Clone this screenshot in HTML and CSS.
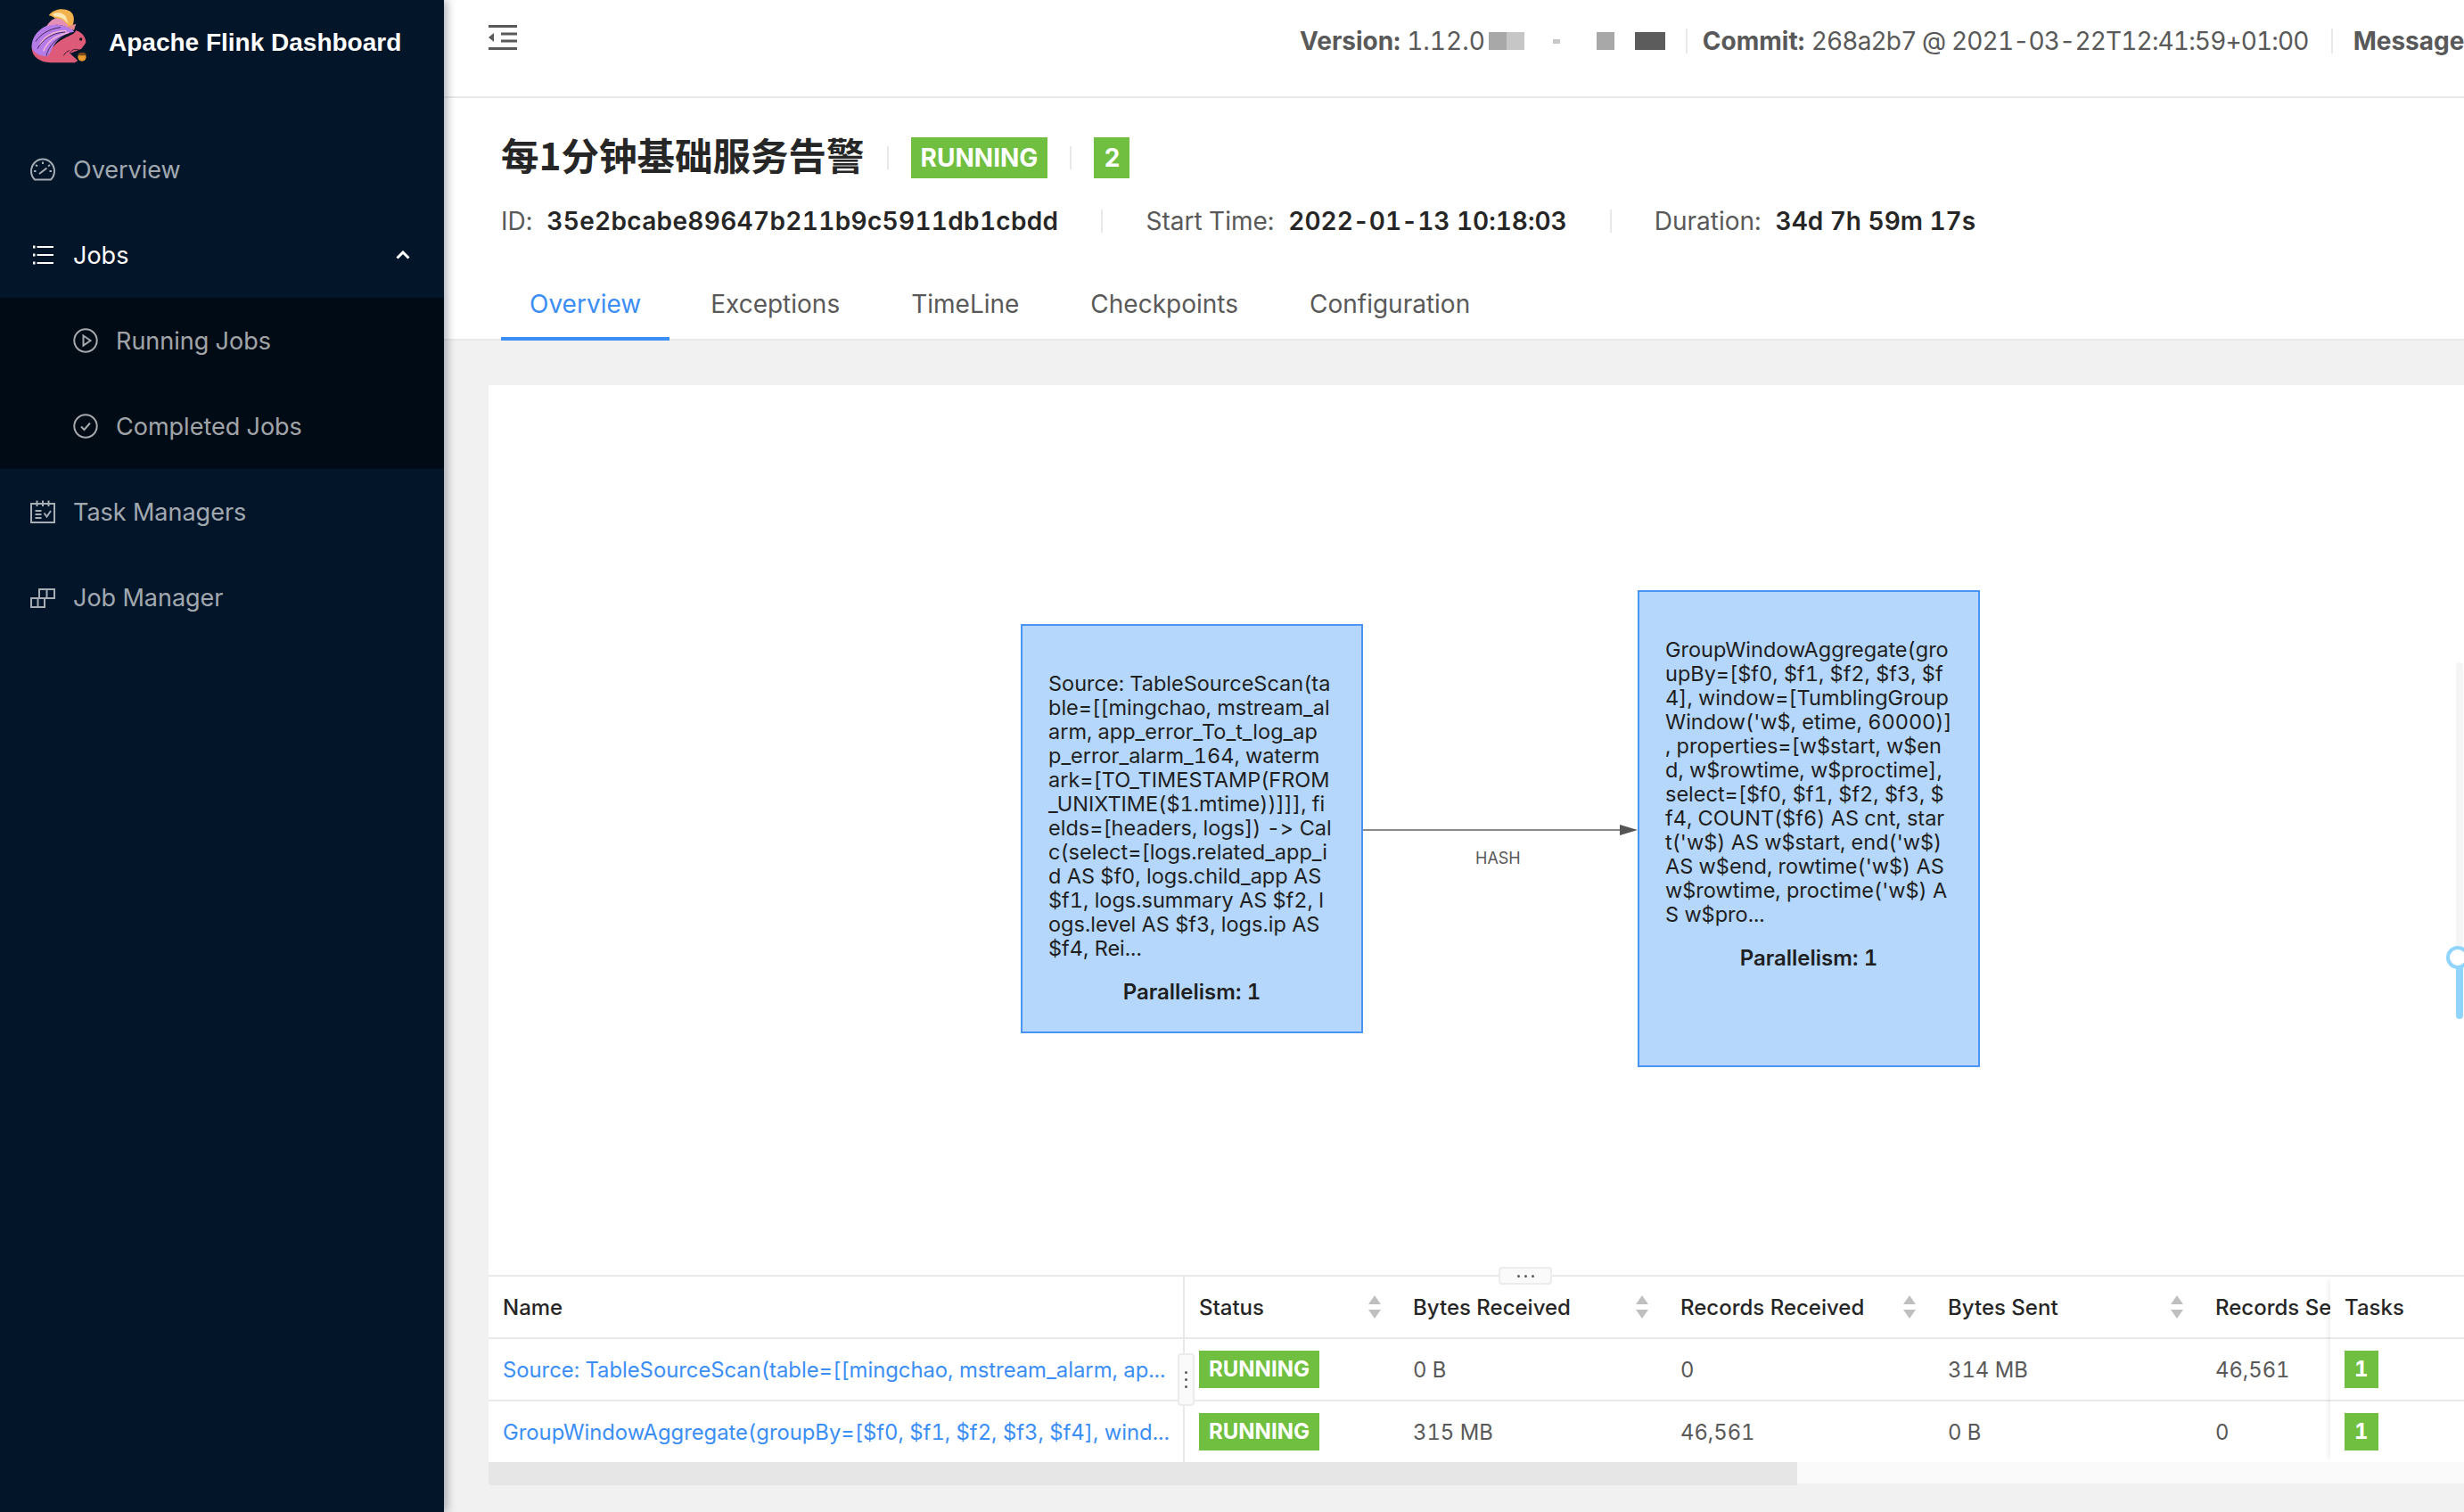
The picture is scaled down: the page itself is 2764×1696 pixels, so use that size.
FILE: index.html
```html
<!DOCTYPE html>
<html>

<head>
    <title>Apache Flink Dashboard</title>
    <meta name="viewport" content="width=device-width, initial-scale=1">
    <link rel="stylesheet" href="styles.css">
</head>

<body>
    <div class="app">
        <div class="sidebar">
            <div class="logo">
                <svg class="logo-mark" viewBox="0 0 228 216">
                    <path fill="#dd5a78" d="M24 140C18 178 50 199 95 199H168L178 192L152 168L190 152L205 132C206 115 192 95 172 91L165 100C150 110 130 115 105 135C90 150 80 160 70 165C50 165 35 155 24 140Z"/>
                    <path fill="#b57be8" d="M23 150C20 120 40 90 70 76C100 66 130 70 160 88L165 95C135 100 105 120 92 150C86 165 82 172 74 178C46 176 30 166 23 150Z"/>
                    <path fill="none" stroke="#eeb0d8" stroke-width="5" d="M50 140C62 112 95 92 140 92M62 160C75 128 105 106 148 98"/>
                    <path fill="none" stroke="#2a1a3a" stroke-width="2.500" d="M36 128C50 105 80 85 120 80M42 152C60 120 92 98 135 96M72 176C80 140 110 112 152 100"/>
                    <path fill="#e58fb8" d="M72 78C85 55 98 48 118 48L158 70L160 88C130 70 100 66 72 78Z"/>
                    <path fill="#f2b24e" d="M80 40C100 15 130 15 150 25C166 35 168 55 160 75L150 80C135 60 122 48 100 50C98 46 90 42 80 40Z"/>
                    <path fill="#fbe6b4" d="M92 36C108 26 128 30 138 44L146 68C130 50 116 42 100 44C98 41 96 38 92 36Z"/>
                    <path fill="#e58a8e" d="M140 78L172 68L165 90Z"/>
                    <path fill="none" stroke="#2a1020" stroke-width="2.500" d="M150 168C158 152 176 150 186 160M130 175C136 165 142 160 150 158"/>
                    <circle cx="192" cy="180" r="14" fill="#e89a2e"/>
                    <path fill="#7a4a1a" d="M178 170C186 162 200 162 207 170L205 175H180Z"/>
                    <circle cx="188" cy="120" r="5" fill="#1a1a1a"/>
                </svg>
                <span class="logo-text">Apache Flink Dashboard</span>
            </div>
            <div class="menu">
                <div class="menu-item">
                    <svg class="icon" viewBox="0 0 28 28"><path d="M5 25.500C2.500 23 1 19.700 1 16C1 8.500 6.800 2.500 14 2.500S27 8.500 27 16C27 19.700 25.500 23 23 25.500Z"/><path d="M10 19L18.500 12.500M14 5.500V8M6 9L8 10.500M22 9L20 10.500M4 16H6.500M24 16H21.500"/></svg>
                    <span>Overview</span>
                </div>
                <div class="menu-item menu-open">
                    <svg class="icon" viewBox="0 0 28 28"><path d="M7.500 5H26M7.500 14H26M7.500 23H26"/><path class="dots" d="M3 3.500h2.500v3H3zM3 12.500h2.500v3H3zM3 21.500h2.500v3H3z"/></svg>
                    <span>Jobs</span>
                    <svg class="chevron" viewBox="0 0 16 10"><path d="M1.500 8.500L8 2L14.500 8.500"/></svg>
                </div>
                <div class="submenu">
                    <div class="menu-item">
                        <svg class="icon" viewBox="0 0 28 28"><circle cx="14" cy="14" r="12.700"/><path d="M11.500 8.500L19.500 14L11.500 19.500Z"/></svg>
                        <span>Running Jobs</span>
                    </div>
                    <div class="menu-item">
                        <svg class="icon" viewBox="0 0 28 28"><circle cx="14" cy="14" r="12.700"/><path d="M9 14.500L12.500 18L19 10.500"/></svg>
                        <span>Completed Jobs</span>
                    </div>
                </div>
                <div class="menu-item">
                    <svg class="icon" viewBox="0 0 28 28"><path d="M1 5H27V26H1ZM7.500 1.500V8M14 1.500V8M20.500 1.500V8M5.500 13H12.500M5.500 17H12.500M5.500 21H12.500M15.500 15.500L18.500 19.500L23 13"/></svg>
                    <span>Task Managers</span>
                </div>
                <div class="menu-item">
                    <svg class="icon" viewBox="0 0 28 28"><path d="M1 15H16V25H1ZM8.500 15V25M10 5H27V15H10ZM18.500 5V15"/></svg>
                    <span>Job Manager</span>
                </div>
            </div>
        </div>

        <div class="main">
            <div class="topbar">
                <svg class="fold-icon" viewBox="0 0 32 28"><path d="M0 1.500H32M14 10H32M14 18H32M0 26.500H32"/><path class="fold-arrow" d="M0 14L6 9V19Z"/></svg>
                <div class="version-info">
                    <span class="version"><b>Version:</b> 1.12.0</span>
                    <i class="smudge smudge-a"></i>
                    <i class="smudge smudge-b"></i>
                    <i class="smudge smudge-c"></i>
                    <i class="smudge smudge-d"></i>
                    <i class="bar-divider"></i>
                    <span><b>Commit:</b> <span class="commit-value">268a2b7 @ 2021-03-22T12:41:59+01:00</span></span>
                    <i class="bar-divider bar-divider-last"></i>
                    <span><b>Message:</b></span>
                </div>
            </div>

            <div class="job-header">
                <div class="title-row">
                    <h2>每1分钟基础服务告警</h2>
                    <i class="title-divider"></i>
                    <span class="tag tag-large">RUNNING</span>
                    <i class="title-divider"></i>
                    <span class="tag tag-large">2</span>
                </div>
                <div class="meta-row">
                    <span class="meta-label">ID:</span>
                    <b class="meta-value meta-id">35e2bcabe89647b211b9c5911db1cbdd</b>
                    <i class="meta-divider"></i>
                    <span class="meta-label">Start Time:</span>
                    <b class="meta-value">2022-01-13 10:18:03</b>
                    <i class="meta-divider"></i>
                    <span class="meta-label">Duration:</span>
                    <b class="meta-value">34d 7h 59m 17s</b>
                </div>
                <div class="tabs">
                    <a class="tab tab-active">Overview</a>
                    <a class="tab">Exceptions</a>
                    <a class="tab">TimeLine</a>
                    <a class="tab">Checkpoints</a>
                    <a class="tab">Configuration</a>
                </div>
            </div>

            <div class="content">
                <div class="canvas">
                    <div class="graph">
                        <div class="node node-source">
                            <div class="node-text">Source: TableSourceScan(ta<br>ble=[[mingchao, mstream_al<br>arm, app_error_To_t_log_ap<br>p_error_alarm_164, waterm<br>ark=[TO_TIMESTAMP(FROM<br>_UNIXTIME($1.mtime))]]], fi<br>elds=[headers, logs]) -&gt; Cal<br>c(select=[logs.related_app_i<br>d AS $f0, logs.child_app AS<br>$f1, logs.summary AS $f2, l<br>ogs.level AS $f3, logs.ip AS<br>$f4, Rei...</div>
                            <div class="node-parallel">Parallelism: 1</div>
                        </div>
                        <div class="node node-agg">
                            <div class="node-text">GroupWindowAggregate(gro<br>upBy=[$f0, $f1, $f2, $f3, $f<br>4], window=[TumblingGroup<br>Window('w$, etime, 60000)]<br>, properties=[w$start, w$en<br>d, w$rowtime, w$proctime],<br>select=[$f0, $f1, $f2, $f3, $<br>f4, COUNT($f6) AS cnt, star<br>t('w$) AS w$start, end('w$)<br>AS w$end, rowtime('w$) AS<br>w$rowtime, proctime('w$) A<br>S w$pro...</div>
                            <div class="node-parallel">Parallelism: 1</div>
                        </div>
                        <svg class="edge" viewBox="0 0 308 20"><path class="edge-line" d="M0 10H290"/><path class="edge-head" d="M288 4L308 10L288 16Z"/></svg>
                        <span class="edge-label">HASH</span>
                        <div class="zoom-track"><div class="zoom-fill"></div><div class="zoom-handle"></div></div>
                    </div>

                    <div class="table-panel">
                        <div class="resize-bar"><i></i><i></i><i></i></div>
                        <div class="resize-col"><i></i><i></i><i></i></div>
                        <div class="table-scroll">
                            <table class="vertex-table">
                                <colgroup>
                                    <col class="col-name"><col class="col-status"><col class="col-num"><col class="col-num"><col class="col-num"><col class="col-num">
                                </colgroup>
                                <thead>
                                    <tr>
                                        <th class="name-cell">Name</th>
                                        <th><div class="th-sort">Status<svg class="sorter" viewBox="0 0 16 26"><path d="M8 0L15 10H1Z"/><path class="sort-down" d="M8 26L1 16H15Z"/></svg></div></th>
                                        <th><div class="th-sort">Bytes Received<svg class="sorter" viewBox="0 0 16 26"><path d="M8 0L15 10H1Z"/><path class="sort-down" d="M8 26L1 16H15Z"/></svg></div></th>
                                        <th><div class="th-sort">Records Received<svg class="sorter" viewBox="0 0 16 26"><path d="M8 0L15 10H1Z"/><path class="sort-down" d="M8 26L1 16H15Z"/></svg></div></th>
                                        <th><div class="th-sort">Bytes Sent<svg class="sorter" viewBox="0 0 16 26"><path d="M8 0L15 10H1Z"/><path class="sort-down" d="M8 26L1 16H15Z"/></svg></div></th>
                                        <th>Records Sent</th>
                                    </tr>
                                </thead>
                                <tbody>
                                    <tr>
                                        <td class="name-cell"><a>Source: TableSourceScan(table=[[mingchao, mstream_alarm, ap...</a></td>
                                        <td><span class="tag">RUNNING</span></td>
                                        <td>0 B</td>
                                        <td>0</td>
                                        <td>314 MB</td>
                                        <td>46,561</td>
                                    </tr>
                                    <tr>
                                        <td class="name-cell"><a>GroupWindowAggregate(groupBy=[$f0, $f1, $f2, $f3, $f4], wind...</a></td>
                                        <td><span class="tag">RUNNING</span></td>
                                        <td>315 MB</td>
                                        <td>46,561</td>
                                        <td>0 B</td>
                                        <td>0</td>
                                    </tr>
                                </tbody>
                            </table>
                        </div>
                        <div class="table-fixed">
                            <table class="vertex-table">
                                <thead><tr><th>Tasks</th></tr></thead>
                                <tbody>
                                    <tr><td><span class="tag">1</span></td></tr>
                                    <tr><td><span class="tag">1</span></td></tr>
                                </tbody>
                            </table>
                        </div>
                    </div>
                    <div class="scrollbar"><div class="scroll-thumb"></div></div>
                </div>
            </div>
        </div>
    </div>
</body>

</html>
```
FILE: styles.css
```css
* {
    box-sizing: border-box;
}

html, body {
    margin: 0;
    height: 100%;
    overflow: hidden;
}

body {
    font-family: Inter, "Noto Sans CJK SC", sans-serif;
    font-size: 28px;
    font-variant-numeric: tabular-nums;
    font-variant-ligatures: none;
    font-feature-settings: "tnum" 1, "calt" 0;
    color: #595959;
    background-color: #f1f1f1;
}

.app {
    display: flex;
    height: 1696px;
}

/* sidebar */
.sidebar {
    flex: none;
    width: 498px;
    background-color: #021529;
    box-shadow: 3px 0 10px rgba(0, 21, 41, 0.35);
    position: relative;
    z-index: 2;
    font-size: 27px;
}

.logo {
    display: flex;
    align-items: flex-start;
    height: 142px;
    padding: 4px 0 0 28px;
}

.logo-mark {
    width: 76px;
    height: 72px;
    flex: none;
}

.logo-text {
    font-family: "Liberation Sans", Arial, sans-serif;
    font-weight: 700;
    font-size: 28px;
    line-height: 88px;
    color: white;
    margin-left: 18px;
}

.menu-item {
    display: flex;
    align-items: center;
    height: 96px;
    padding-left: 34px;
    color: rgba(255, 255, 255, 0.65);
}

.menu-open {
    color: white;
}

.icon {
    width: 28px;
    height: 28px;
    flex: none;
    margin-right: 20px;
    fill: none;
    stroke: currentColor;
    stroke-width: 2;
}

.icon .dots {
    fill: currentColor;
    stroke: none;
}

.chevron {
    width: 16px;
    height: 10px;
    margin-left: auto;
    margin-right: 38px;
    fill: none;
    stroke: currentColor;
    stroke-width: 3;
}

.submenu {
    background-color: #000b15;
}

.submenu .menu-item {
    padding-left: 82px;
    height: 96px;
}

/* top bar */
.main {
    flex: 1;
    min-width: 0;
    overflow: hidden;
}

.topbar {
    display: flex;
    align-items: flex-start;
    height: 110px;
    background-color: white;
    border-bottom: 2px solid #e9e9e9;
    white-space: nowrap;
}

.fold-icon {
    flex: none;
    width: 32px;
    height: 28px;
    margin: 28px 0 0 50px;
    fill: none;
    stroke: #595959;
    stroke-width: 3;
}

.fold-arrow {
    fill: #595959;
    stroke: none;
}

.version-info {
    position: relative;
    display: flex;
    align-items: center;
    flex: none;
    height: 34px;
    margin: 29px 0 0 878px;
}

.version-info b {
    font-weight: 700;
}

.commit-value {
    letter-spacing: -0.85px;
}

.bar-divider {
    width: 2px;
    height: 28px;
    margin: 0 17px;
    background-color: #e8e8e8;
}

.bar-divider-last {
    margin: 0 23px 0 25px;
}

.smudge {
    display: block;
    height: 20px;
    flex: none;
}

.smudge-a {
    width: 40px;
    margin-left: 4px;
    background: linear-gradient(90deg, #a8a8a8 50%, #c6c6c6 50%);
}

.smudge-b {
    width: 8px;
    height: 5px;
    margin-left: 32px;
    background-color: #c8c8c8;
}

.smudge-c {
    width: 20px;
    margin-left: 41px;
    background-color: #a8a8a8;
}

.smudge-d {
    width: 34px;
    margin-left: 23px;
    margin-right: 6px;
    background-color: #5c5c5c;
}

/* job header */
.job-header {
    background-color: white;
    height: 272px;
    padding: 36px 0 0 64px;
    border-bottom: 2px solid #e9e9e9;
}

.title-row {
    display: flex;
    align-items: center;
    height: 54px;
}

h2 {
    margin: 0;
    font-family: "Noto Sans CJK SC", sans-serif;
    font-size: 42.500px;
    line-height: 54px;
    font-weight: 600;
    color: #262626;
}

.title-divider {
    width: 2px;
    height: 26px;
    margin: 8px 25px 0;
    background-color: #e8e8e8;
}

.tag {
    display: inline-block;
    height: 42px;
    line-height: 42px;
    padding: 0 11px;
    font-size: 24px;
    font-weight: 700;
    color: white;
    background-color: #70bf40;
    vertical-align: middle;
}

.tag-large {
    height: 46px;
    line-height: 46px;
    margin-top: 8px;
    font-size: 28px;
    padding: 0 11px;
}

.meta-row {
    display: flex;
    align-items: center;
    height: 40px;
    margin-top: 28px;
    white-space: nowrap;
}

.meta-value {
    margin-left: 16px;
    font-weight: 600;
    color: #262626;
}

.meta-id {
    letter-spacing: 0.33px;
}

.meta-divider {
    width: 2px;
    height: 26px;
    margin: 0 48px;
    background-color: #e8e8e8;
}

.tabs {
    display: flex;
    height: 84px;
    margin-top: 30px;
}

.tab {
    padding: 16px 32px 0;
    margin-right: 16px;
    height: 84px;
    line-height: 54px;
}

.tab-active {
    color: #3b8ef5;
    margin-right: 14px;
    border-bottom: 4px solid #3b8ef5;
}

/* canvas */
.content {
    padding: 50px 0 0 50px;
}

.canvas {
    width: 2216px;
    background-color: white;
    border-radius: 0 0 4px 4px;
}

.graph {
    position: relative;
    height: 998px;
}

.node {
    position: absolute;
    width: 384px;
    background-color: #b5d7fb;
    border: 2px solid #4a94f5;
    color: #1f1f1f;
    font-size: 23.500px;
    line-height: 27px;
    white-space: nowrap;
}

.node-source {
    left: 597px;
    top: 268px;
    height: 459px;
    padding: 51px 0 0 29px;
}

.node-agg {
    left: 1289px;
    top: 230px;
    height: 535px;
    padding: 51px 0 0 29px;
}

.node-parallel {
    margin: 22px 0 0 -29px;
    text-align: center;
    font-size: 24px;
    font-weight: 600;
}

.edge {
    position: absolute;
    left: 981px;
    top: 489px;
    width: 308px;
    height: 20px;
}

.edge-line {
    fill: none;
    stroke: #8a8a8a;
    stroke-width: 2;
}

.edge-head {
    fill: #555;
}

.edge-label {
    position: absolute;
    left: 1107px;
    top: 520px;
    font-size: 18px;
    line-height: 22px;
    color: #595959;
}

.zoom-track {
    position: absolute;
    left: 2207px;
    top: 311px;
    width: 8px;
    height: 400px;
    border-radius: 4px;
    background-color: #f5f5f5;
}

.zoom-fill {
    position: absolute;
    left: 0;
    bottom: 0;
    width: 8px;
    height: 70px;
    border-radius: 4px;
    background-color: #91d5ff;
}

.zoom-handle {
    position: absolute;
    left: -11px;
    top: 318px;
    width: 26px;
    height: 26px;
    border-radius: 50%;
    border: 4px solid #91d5ff;
    background-color: white;
}

/* table */
.table-panel {
    position: relative;
    display: flex;
    border-top: 2px solid #e9e9e9;
}

.table-scroll {
    flex: none;
    width: 2066px;
    overflow: hidden;
}

.table-fixed {
    flex: 1;
    box-shadow: -6px 0 6px -4px rgba(0, 0, 0, 0.08);
    position: relative;
}

.vertex-table {
    width: 100%;
    table-layout: fixed;
    border-collapse: separate;
    border-spacing: 0;
    font-size: 23.800px;
}

.table-scroll .vertex-table {
    width: 2221px;
}

.col-name {
    width: 781px;
}

.col-status {
    width: 240px;
}

.col-num {
    width: 300px;
}

.vertex-table th {
    height: 70px;
    padding: 0 16px;
    text-align: left;
    font-size: 24px;
    font-weight: 500;
    color: #262626;
    border-bottom: 2px solid #e9e9e9;
    white-space: nowrap;
    overflow: hidden;
}

.vertex-table td {
    height: 70px;
    padding: 0 16px;
    border-bottom: 2px solid #e9e9e9;
    white-space: nowrap;
    overflow: hidden;
}

.vertex-table tr:last-child td {
    height: 68px;
    border-bottom: none;
}

.vertex-table .name-cell {
    border-right: 2px solid #e9e9e9;
}

.vertex-table a {
    color: #3b8ef5;
}

.th-sort {
    display: flex;
    align-items: center;
    justify-content: space-between;
    padding-right: 3px;
}

.sorter {
    width: 16px;
    height: 26px;
    fill: #bfbfbf;
}

.resize-bar {
    position: absolute;
    left: 1133px;
    top: -11px;
    width: 60px;
    height: 20px;
    border: 2px solid #ececec;
    border-radius: 4px;
    background-color: #fafafa;
    display: flex;
    align-items: center;
    justify-content: center;
    gap: 5px;
    z-index: 1;
}

.resize-col {
    position: absolute;
    left: 773px;
    top: 86px;
    width: 19px;
    height: 59px;
    border: 2px solid #ececec;
    border-radius: 4px;
    background-color: #fafafa;
    display: flex;
    flex-direction: column;
    align-items: center;
    justify-content: center;
    gap: 5px;
    z-index: 1;
}

.resize-bar i,
.resize-col i {
    width: 3px;
    height: 3px;
    border-radius: 50%;
    background-color: #595959;
}

.scrollbar {
    height: 26px;
    background: linear-gradient(#fafafa 24px, #f1f1f1 24px);
}

.scroll-thumb {
    width: 1468px;
    height: 26px;
    background-color: #e6e6e6;
    border-radius: 0 0 0 4px;
}
```
